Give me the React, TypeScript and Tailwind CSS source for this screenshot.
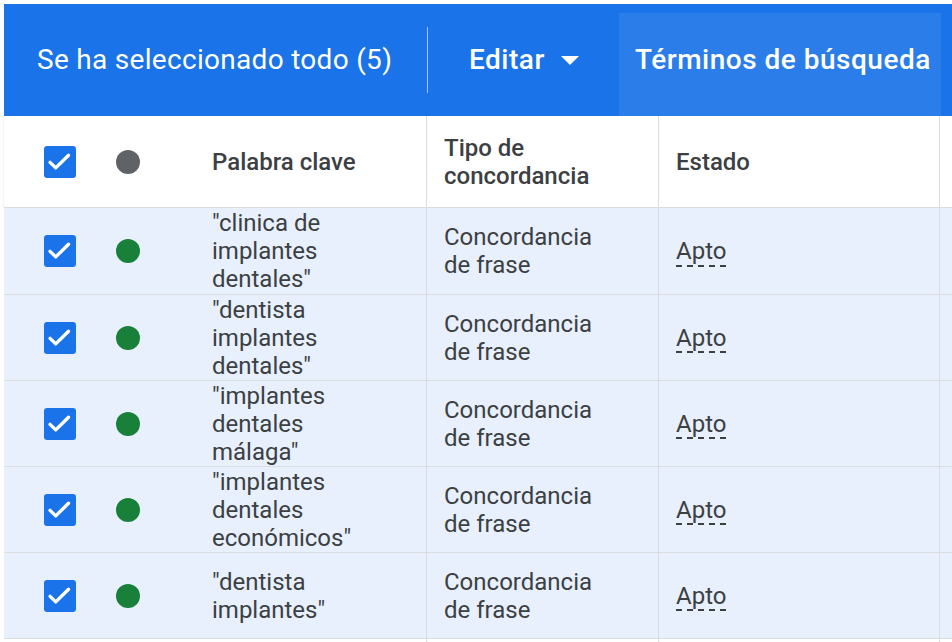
import React from "react";

const rows = [
  { kw: ['"clinica de', "implantes", 'dentales"'] },
  { kw: ['"dentista', "implantes", 'dentales"'] },
  { kw: ['"implantes', "dentales", 'málaga"'] },
  { kw: ['"implantes', "dentales", 'económicos"'] },
  { kw: ['"dentista', 'implantes"'] },
];

function Check() {
  return (
    <svg width="32" height="32" viewBox="0 0 18 18" className="shrink-0">
      <rect x="0" y="0" width="18" height="18" rx="1.8" fill="#1a73e8" />
      <path d="M3.4 9.2l3.2 3.1 7.2-7.1" fill="none" stroke="#fff" strokeWidth="1.9" strokeLinecap="round" strokeLinejoin="round" />
    </svg>
  );
}

function Row({ kw, h }: { kw: string[]; h: string }) {
  return (
    <div className={`flex ${h} border-b border-[#dadce0] bg-[#e8f0fe]`}>
      <div className="flex w-[423px] shrink-0 items-center border-r border-[#dadce0]">
        <div className="ml-[40px]"><Check /></div>
        <div className="ml-[40px] h-[24px] w-[24px] shrink-0 rounded-full bg-[#188038]" />
        <div className="ml-[72px] flex flex-col text-[24px] leading-[28px] text-[#3c4043]">
          {kw.map((k, i) => (
            <span key={i}>{k}</span>
          ))}
        </div>
      </div>
      <div className="flex w-[232px] shrink-0 flex-col justify-center border-r border-[#dadce0] pl-[17px] text-[24px] leading-[28px] text-[#3c4043]">
        <span>Concordancia</span>
        <span>de frase</span>
      </div>
      <div className="flex w-[281px] shrink-0 items-center border-r border-[#dadce0] pl-[17px] text-[24px] leading-[28px] text-[#3c4043]">
        <span className="underline decoration-dashed decoration-[#3c4043] decoration-2 underline-offset-[6px]">Apto</span>
      </div>
      <div className="flex-1" />
    </div>
  );
}

export default function App() {
  return (
    <div
      className="h-[642px] w-[952px] overflow-hidden bg-white pl-[4px] pt-[4px]"
      style={{ fontFamily: "Roboto, 'Noto Sans', sans-serif" }}
    >
      {/* top bar */}
      <div className="flex h-[112px] bg-[#1a73e8] text-white">
        <div className="flex w-[423px] shrink-0 items-center pl-[33px] text-[28px] tracking-[0.3px]">
          Se ha seleccionado todo (5)
        </div>
        <div className="my-[23px] w-px shrink-0 bg-[#a9c8f5]" />
        <div className="flex w-[191px] shrink-0 items-center pl-[41px] text-[28px] font-medium tracking-[0.5px]">
          <span>Editar</span>
          <svg width="18" height="9" viewBox="0 0 18 9" className="ml-[16px]">
            <polygon points="0,0 18,0 9,9" fill="#fff" />
          </svg>
        </div>
        <div className="mt-[9px] flex w-[322px] shrink-0 items-center bg-[#2b7de9] pb-[9px] pl-[16px] text-[28px] font-medium tracking-[0.5px]">
          Términos de búsqueda
        </div>
        <div className="flex-1" />
      </div>

      {/* header row */}
      <div className="flex h-[92px] border-b border-[#dadce0] bg-white shadow-[0_1px_2px_rgba(60,64,67,0.15)]">
        <div className="flex w-[423px] shrink-0 items-center border-r border-[#dadce0]">
          <div className="ml-[40px]"><Check /></div>
          <div className="ml-[40px] h-[24px] w-[24px] shrink-0 rounded-full bg-[#5f6368]" />
          <div className="ml-[72px] text-[24px] font-medium leading-[28px] text-[#3c4043]">Palabra clave</div>
        </div>
        <div className="flex w-[232px] shrink-0 flex-col justify-center border-r border-[#dadce0] pl-[17px] text-[24px] font-medium leading-[28px] text-[#3c4043]">
          <span>Tipo de</span>
          <span>concordancia</span>
        </div>
        <div className="flex w-[281px] shrink-0 items-center border-r border-[#dadce0] pl-[17px] text-[24px] font-medium leading-[28px] text-[#3c4043]">
          Estado
        </div>
        <div className="flex-1" />
      </div>

      {rows.map((r, i) => (
        <Row key={i} kw={r.kw} h={i === 0 ? "h-[87px]" : "h-[86px]"} />
      ))}
      <div className="flex h-[20px] bg-white">
        <div className="w-[423px] shrink-0 border-r border-[#dadce0]" />
        <div className="w-[232px] shrink-0 border-r border-[#dadce0]" />
        <div className="w-[281px] shrink-0 border-r border-[#dadce0]" />
      </div>
    </div>
  );
}
